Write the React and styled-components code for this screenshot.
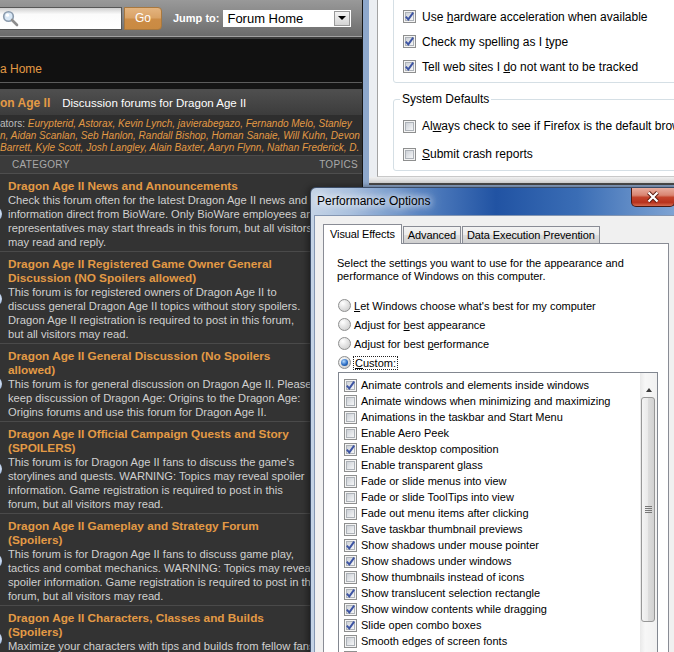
import styled, { createGlobalStyle } from "styled-components";

const GlobalStyle = createGlobalStyle`
  *, *::before, *::after {
    box-sizing: border-box;
  }
  html, body {
    margin: 0;
    padding: 0;
    background: #222;
    overflow: hidden;
  }
`;

const Desktop = styled.div`
  position: relative;
  width: 674px;
  height: 652px;
  overflow: hidden;
  background: #333;
`;

/* ---------- forum page ---------- */

const ForumPage = styled.div`
  position: absolute;
  left: 0;
  top: 0;
  width: 363px;
  height: 652px;
  overflow: hidden;
  display: flex;
  flex-direction: column;
  background: #333;
  border-right: 1px solid #161616;
  font-family: "Liberation Sans", Arial, sans-serif;
`;

const TopBar = styled.div`
  height: 37px;
  flex-shrink: 0;
  display: flex;
  align-items: center;
  background: linear-gradient(#999, #868686 45%, #6b6b6b);
  border-bottom: 1px solid #a0a0a0;
`;

const SearchBox = styled.div`
  width: 122px;
  height: 23px;
  display: flex;
  align-items: center;
  padding-left: 2px;
  background: linear-gradient(#cfcfcf, #fbfbfb 30%, #fff);
  border: 1px solid #575757;
  border-left: none;
`;

const GoButton = styled.div`
  width: 38px;
  height: 23px;
  margin-left: 2px;
  display: flex;
  align-items: center;
  justify-content: center;
  border: 1px solid #a8783f;
  border-radius: 0 4px 4px 0;
  background: linear-gradient(#e4b47f, #d9a265 48%, #cc8c46 52%, #c98a42);
  color: #fff;
  font-size: 12px;
`;

const JumpLabel = styled.span`
  margin-left: 11px;
  color: #fff;
  font-size: 11px;
  font-weight: bold;
`;

const JumpSelect = styled.div`
  margin-left: 4px;
  width: 128px;
  height: 17px;
  display: flex;
  align-items: center;
  background: #fff;
  color: #000;
  font-size: 13px;
  padding-left: 4px;
`;

const SelectArrow = styled.span`
  margin-left: auto;
  margin-right: 1px;
  width: 16px;
  height: 15px;
  display: flex;
  align-items: center;
  justify-content: center;
  border: 1px solid #9a9a9a;
  background: linear-gradient(#f4f4f4, #d4d4d4);

  &::after {
    content: "";
    border-left: 4px solid transparent;
    border-right: 4px solid transparent;
    border-top: 4px solid #000;
  }
`;

const NavBand = styled.div`
  height: 46px;
  flex-shrink: 0;
  padding-top: 23px;
  background: #111;
  border-top: 2px solid #3a3a3a;
  border-bottom: 1px solid #5c5c5c;
  color: #e39a45;
  font-size: 12px;
  line-height: 14px;
  white-space: nowrap;
`;

const SubBand = styled.div`
  height: 8px;
  flex-shrink: 0;
  background: #151515;
  border-bottom: 2px solid #4e4e4e;
`;

const HeaderRow = styled.div`
  height: 24px;
  flex-shrink: 0;
  display: flex;
  align-items: center;
  gap: 12px;
  background: linear-gradient(#4e4e4e, #3c3c3c);
  white-space: nowrap;
`;

const HeaderTitle = styled.span`
  color: #e39a45;
  font-size: 12px;
  font-weight: bold;
`;

const HeaderSub = styled.span`
  color: #fff;
  font-size: 11.5px;
`;

const ModBox = styled.div`
  height: 41px;
  flex-shrink: 0;
  padding-top: 3px;
  background: #2e2e2e;
  border-bottom: 1px solid #4b4b4b;
  font-size: 10px;
  line-height: 12px;
`;

const ModLine = styled.div`
  white-space: nowrap;
  color: #e39a45;
  font-style: italic;
`;

const ModLabel = styled.span`
  color: #bdbdbd;
  font-style: normal;
`;

const CategoryRow = styled.div`
  height: 18px;
  flex-shrink: 0;
  display: flex;
  align-items: center;
  justify-content: space-between;
  padding: 0 4px 0 12px;
  background: #3b3b3b;
  border-bottom: 1px solid #4e4e4e;
  color: #a9a9a9;
  font-size: 10px;
  letter-spacing: 0.3px;
`;

const ForumRow = styled.div`
  flex-shrink: 0;
  display: flex;
  align-items: center;
  padding: 5px 0 2px;
  border-bottom: 1px solid #4a4a4a;
`;

const ForumIcon = styled.span`
  width: 16px;
  height: 16px;
  margin-left: -14px;
  margin-right: 6px;
  flex-shrink: 0;
  border-radius: 50%;
  background: radial-gradient(circle at 75% 45%, #eef4fc, #7ea2d6 55%, #2d5290);
`;

const ForumText = styled.div`
  display: flex;
  flex-direction: column;
  white-space: nowrap;
  line-height: 14px;
`;

const ForumTitle = styled.span`
  color: #e39a45;
  font-size: 11.8px;
  font-weight: bold;
`;

const ForumDesc = styled.span`
  color: #d0d0d0;
  font-size: 11.2px;
`;

/* ---------- firefox options window ---------- */

const FirefoxWindow = styled.div`
  position: absolute;
  left: 363px;
  top: 0;
  width: 311px;
  height: 187px;
  display: flex;
  flex-direction: column;
  background: #8ea8cc;
  font-family: "Liberation Sans", Arial, sans-serif;
`;

const FirefoxBody = styled.div`
  height: 185px;
  margin-left: 6px;
  display: flex;
  flex-direction: column;
  background: #ebeef2;
  border-bottom: 2px solid #4b4b4b;
`;

const FirefoxPane = styled.div`
  height: 177px;
  margin-left: 8px;
  display: flex;
  flex-direction: column;
  padding-left: 15px;
  background: #fff;
  border-left: 1px solid #a3a3a3;
  border-bottom: 1px solid #c9c9c9;
  overflow: hidden;
`;

const FirefoxFoot = styled.div`
  flex: 1;
  background: linear-gradient(#f0f0f0, #d3d3d3);
`;

const GroupBox = styled.div`
  width: 320px;
  margin-top: -10px;
  padding: 13px 0 3px 9px;
  border: 1px solid #d5dfe5;
  border-radius: 3px;
`;

const GroupSet = styled.fieldset`
  width: 320px;
  margin: 9px 0 0;
  padding: 6px 0 2px 9px;
  border: 1px solid #d5dfe5;
  border-radius: 3px;
`;

const GroupLegend = styled.legend`
  margin-left: -3px;
  padding: 0 2px;
  color: #000;
  font-size: 12px;
  line-height: 14px;
`;

const PrefRow = styled.div`
  height: ${(p) => p.$h}px;
  display: flex;
  align-items: center;
  gap: 6px;
  color: #000;
  font-size: 12px;
  white-space: nowrap;
`;

/* ---------- win7 controls ---------- */

const BoxOuter = styled.span`
  position: relative;
  width: 13px;
  height: 13px;
  flex-shrink: 0;
  display: flex;
  padding: 1px;
  border: 1px solid #8e8f8f;
  background: #f4f4f4;
`;

const BoxInner = styled.span`
  flex: 1;
  border: 1px solid #adb2b8;
  background: linear-gradient(135deg, #cdd1d7, #f5f6f7);
`;

const CheckMark = styled.svg`
  position: absolute;
  left: 0;
  top: 0;
`;

const Checkbox = ({ checked }) => (
  <BoxOuter>
    <BoxInner />
    {checked && (
      <CheckMark width="11" height="11" viewBox="0 0 11 11">
        <path d="M1.8 5.6 L4.3 8.4 L9.2 1.6" fill="none" stroke="#3d54a3" strokeWidth="1.9" />
      </CheckMark>
    )}
  </BoxOuter>
);

const Radio = styled.span`
  width: 13px;
  height: 13px;
  flex-shrink: 0;
  display: flex;
  align-items: center;
  justify-content: center;
  border-radius: 50%;
  border: 1px solid #8e8f8f;
  background: radial-gradient(circle at 35% 30%, #fff, #e4e4e4 45%, #c6c6c6);

  &::after {
    content: "";
    display: ${(p) => (p.$on ? "block" : "none")};
    width: 7px;
    height: 7px;
    border-radius: 50%;
    background: radial-gradient(circle at 40% 35%, #b5dcff, #2b6cc4 55%, #103a78);
  }
`;

/* ---------- performance options dialog ---------- */

const Dialog = styled.div`
  position: absolute;
  left: 310px;
  top: 187px;
  width: 372px;
  height: 480px;
  display: flex;
  flex-direction: column;
  padding: 0 6px 0 3px;
  border: 1px solid #3a4b66;
  border-radius: 6px 6px 0 0;
  background: linear-gradient(90deg, #c4d3e6, #abc2df 10%, #5581c0 30%, #2153a3 50%, #3a6db5 72%, #83a7d5);
  box-shadow: -2px 0 6px rgba(0, 0, 0, 0.45);
  font-family: "Liberation Sans", Tahoma, sans-serif;
`;

const TitleBar = styled.div`
  height: 27px;
  flex-shrink: 0;
  display: flex;
  align-items: flex-start;
`;

const TitleText = styled.span`
  margin-top: 6px;
  padding-left: 3px;
  color: #000;
  font-size: 12px;
  line-height: 15px;
  text-shadow: 0 0 6px #fff, 0 0 10px #fff, 0 0 14px rgba(255, 255, 255, 0.8);
`;

const CloseButton = styled.span`
  margin-left: auto;
  width: 44px;
  height: 19px;
  display: flex;
  align-items: center;
  justify-content: center;
  border: 1px solid #4a1710;
  border-top: none;
  border-radius: 0 0 5px 5px;
  background: linear-gradient(#e8ad9f, #d98572 40%, #c3432c 52%, #b8321d 80%, #d46a4f);
`;

const DialogBody = styled.div`
  flex: 1;
  display: flex;
  flex-direction: column;
  padding: 8px 5px 0 8px;
  background: #f0f0f0;
  border: 1px solid #8496b2;
`;

const TabStrip = styled.div`
  position: relative;
  z-index: 1;
  display: flex;
  align-items: flex-end;
  gap: 1px;
  margin-bottom: -1px;
`;

const Tab = styled.span`
  height: ${(p) => (p.$active ? 20 : 18)}px;
  display: flex;
  align-items: center;
  padding: ${(p) => (p.$active ? "0 6px 1px" : "0 4px")};
  border: 1px solid #898c95;
  border-bottom: ${(p) => (p.$active ? "none" : "1px solid #898c95")};
  background: ${(p) =>
    p.$active ? "#fff" : "linear-gradient(#f3f3f3, #ebebeb 48%, #dddddd 52%, #cfcfcf)"};
  color: #000;
  font-size: 11px;
  letter-spacing: -0.1px;
`;

const Panel = styled.div`
  flex: 1;
  display: flex;
  flex-direction: column;
  padding: 13px 0 0 13px;
  background: #fff;
  border: 1px solid #898c95;
  font-size: 11px;
  color: #000;
`;

const Intro = styled.p`
  margin: 0;
  line-height: 13px;
`;

const RadioList = styled.div`
  display: flex;
  flex-direction: column;
  margin: 13px 0 0 1px;
`;

const RadioRow = styled.label`
  height: 19px;
  display: flex;
  align-items: center;
  gap: 3px;
`;

const FocusLabel = styled.span`
  outline: 1px dotted #222;
  outline-offset: 0;
  padding: 0 1px;
`;

const ListBox = styled.div`
  width: 320px;
  height: 300px;
  margin-left: 1px;
  display: flex;
  border: 1px solid #828790;
`;

const ListItems = styled.div`
  flex: 1;
  padding: 4px 0 0 5px;
`;

const ListRow = styled.div`
  height: 16px;
  display: flex;
  align-items: center;
  gap: 4px;
  white-space: nowrap;
`;

const ScrollBar = styled.div`
  width: 17px;
  display: flex;
  flex-direction: column;
  background: linear-gradient(90deg, #e9e9e9, #f7f7f7 30%, #f1f1f1);
`;

const ScrollArrow = styled.span`
  height: 19px;
  display: flex;
  justify-content: center;
  padding-top: 9px;

  &::after {
    content: "";
    border-left: 3.5px solid transparent;
    border-right: 3.5px solid transparent;
    border-bottom: 4px solid #3a3a3a;
  }
`;

const ScrollThumb = styled.span`
  height: 225px;
  margin: 5px 2px 0 1px;
  display: flex;
  align-items: center;
  justify-content: center;
  border: 1px solid #979797;
  border-radius: 3px;
  background: linear-gradient(90deg, #f4f4f4, #e9e9e9 50%, #dcdcdc 52%, #d2d2d2);

  &::after {
    content: "";
    width: 7px;
    height: 7px;
    background: repeating-linear-gradient(#777 0 1px, transparent 1px 2px);
  }
`;

/* ---------- data ---------- */

const moderators = [
  { label: "ators: ", names: "Eurypterid, Astorax, Kevin Lynch, javierabegazo, Fernando Melo, Stanley" },
  { names: "n, Aidan Scanlan, Seb Hanlon, Randall Bishop, Homan Sanaie, Will Kuhn, Devon" },
  { names: "Barrett, Kyle Scott, Josh Langley, Alain Baxter, Aaryn Flynn, Nathan Frederick, D." },
];

const forums = [
  {
    title: ["Dragon Age II News and Announcements"],
    desc: [
      "Check this forum often for the latest Dragon Age II news and",
      "information direct from BioWare. Only BioWare employees and",
      "representatives may start threads in this forum, but all visitors",
      "may read and reply.",
    ],
  },
  {
    title: ["Dragon Age II Registered Game Owner General", "Discussion (NO Spoilers allowed)"],
    desc: [
      "This forum is for registered owners of Dragon Age II to",
      "discuss general Dragon Age II topics without story spoilers.",
      "Dragon Age II registration is required to post in this forum,",
      "but all visitors may read.",
    ],
  },
  {
    title: ["Dragon Age II General Discussion (No Spoilers", "allowed)"],
    desc: [
      "This forum is for general discussion on Dragon Age II. Please",
      "keep discussion of Dragon Age: Origins to the Dragon Age:",
      "Origins forums and use this forum for Dragon Age II.",
    ],
  },
  {
    title: ["Dragon Age II Official Campaign Quests and Story", "(SPOILERS)"],
    desc: [
      "This forum is for Dragon Age II fans to discuss the game's",
      "storylines and quests. WARNING: Topics may reveal spoiler",
      "information. Game registration is required to post in this",
      "forum, but all visitors may read.",
    ],
  },
  {
    title: ["Dragon Age II Gameplay and Strategy Forum", "(Spoilers)"],
    desc: [
      "This forum is for Dragon Age II fans to discuss game play,",
      "tactics and combat mechanics. WARNING: Topics may reveal",
      "spoiler information. Game registration is required to post in this",
      "forum, but all visitors may read.",
    ],
  },
  {
    title: ["Dragon Age II Characters, Classes and Builds", "(Spoilers)"],
    desc: [
      "Maximize your characters with tips and builds from fellow fans",
      "and discuss the classes, skills and talents of Dragon Age II.",
    ],
  },
];

const effects = [
  ["Animate controls and elements inside windows", true],
  ["Animate windows when minimizing and maximizing", false],
  ["Animations in the taskbar and Start Menu", false],
  ["Enable Aero Peek", false],
  ["Enable desktop composition", true],
  ["Enable transparent glass", false],
  ["Fade or slide menus into view", false],
  ["Fade or slide ToolTips into view", false],
  ["Fade out menu items after clicking", false],
  ["Save taskbar thumbnail previews", false],
  ["Show shadows under mouse pointer", true],
  ["Show shadows under windows", true],
  ["Show thumbnails instead of icons", false],
  ["Show translucent selection rectangle", true],
  ["Show window contents while dragging", true],
  ["Slide open combo boxes", true],
  ["Smooth edges of screen fonts", false],
  ["Smooth-scroll list boxes", true],
];

const SearchIcon = () => (
  <svg width="17" height="17" viewBox="0 0 17 17">
    <circle cx="6.5" cy="6.5" r="4.8" fill="#d9e8f6" stroke="#8a9aac" strokeWidth="1.6" />
    <circle cx="5.5" cy="5.2" r="1.6" fill="#fff" />
    <path d="M10 10 L15 15" stroke="#8d8d8d" strokeWidth="2.6" strokeLinecap="round" />
  </svg>
);

const CloseIcon = () => (
  <svg width="14" height="12" viewBox="0 0 14 12">
    <path d="M2.5 1.5 L11.5 10.5 M11.5 1.5 L2.5 10.5" stroke="#5a1a10" strokeWidth="4" />
    <path d="M2.5 1.5 L11.5 10.5 M11.5 1.5 L2.5 10.5" stroke="#fff" strokeWidth="2.2" />
  </svg>
);

const App = () => {
  return (
    <Desktop>
      <GlobalStyle />

      <ForumPage>
        <TopBar>
          <SearchBox>
            <SearchIcon />
          </SearchBox>
          <GoButton>Go</GoButton>
          <JumpLabel>Jump to:</JumpLabel>
          <JumpSelect>
            Forum Home
            <SelectArrow />
          </JumpSelect>
        </TopBar>
        <NavBand>a Home</NavBand>
        <SubBand />
        <HeaderRow>
          <HeaderTitle>on Age II</HeaderTitle>
          <HeaderSub>Discussion forums for Dragon Age II</HeaderSub>
        </HeaderRow>
        <ModBox>
          {moderators.map((m, i) => (
            <ModLine key={i}>
              {m.label && <ModLabel>{m.label}</ModLabel>}
              {m.names}
            </ModLine>
          ))}
        </ModBox>
        <CategoryRow>
          <span>CATEGORY</span>
          <span>TOPICS</span>
        </CategoryRow>
        {forums.map((f, i) => (
          <ForumRow key={i}>
            <ForumIcon />
            <ForumText>
              {f.title.map((t) => (
                <ForumTitle key={t}>{t}</ForumTitle>
              ))}
              {f.desc.map((d) => (
                <ForumDesc key={d}>{d}</ForumDesc>
              ))}
            </ForumText>
          </ForumRow>
        ))}
      </ForumPage>

      <FirefoxWindow>
        <FirefoxBody>
          <FirefoxPane>
            <GroupBox>
              <PrefRow $h={25}>
                <Checkbox checked />
                <span>Use <u>h</u>ardware acceleration when available</span>
              </PrefRow>
              <PrefRow $h={25}>
                <Checkbox checked />
                <span>Check my spelling as I <u>t</u>ype</span>
              </PrefRow>
              <PrefRow $h={25}>
                <Checkbox checked />
                <span>Tell web sites I <u>d</u>o not want to be tracked</span>
              </PrefRow>
            </GroupBox>
            <GroupSet>
              <GroupLegend>System Defaults</GroupLegend>
              <PrefRow $h={28}>
                <Checkbox />
                <span>Al<u>w</u>ays check to see if Firefox is the default browser on startup</span>
              </PrefRow>
              <PrefRow $h={28}>
                <Checkbox />
                <span><u>S</u>ubmit crash reports</span>
              </PrefRow>
            </GroupSet>
          </FirefoxPane>
          <FirefoxFoot />
        </FirefoxBody>
      </FirefoxWindow>

      <Dialog>
        <TitleBar>
          <TitleText>Performance Options</TitleText>
          <CloseButton>
            <CloseIcon />
          </CloseButton>
        </TitleBar>
        <DialogBody>
          <TabStrip>
            <Tab $active>Visual Effects</Tab>
            <Tab>Advanced</Tab>
            <Tab>Data Execution Prevention</Tab>
          </TabStrip>
          <Panel>
            <Intro>
              Select the settings you want to use for the appearance and
              <br />
              performance of Windows on this computer.
            </Intro>
            <RadioList>
              <RadioRow>
                <Radio />
                <span><u>L</u>et Windows choose what's best for my computer</span>
              </RadioRow>
              <RadioRow>
                <Radio />
                <span>Adjust for <u>b</u>est appearance</span>
              </RadioRow>
              <RadioRow>
                <Radio />
                <span>Adjust for best <u>p</u>erformance</span>
              </RadioRow>
              <RadioRow>
                <Radio $on />
                <FocusLabel><u>C</u>ustom:</FocusLabel>
              </RadioRow>
            </RadioList>
            <ListBox>
              <ListItems>
                {effects.map(([label, on]) => (
                  <ListRow key={label}>
                    <Checkbox checked={on} />
                    <span>{label}</span>
                  </ListRow>
                ))}
              </ListItems>
              <ScrollBar>
                <ScrollArrow />
                <ScrollThumb />
              </ScrollBar>
            </ListBox>
          </Panel>
        </DialogBody>
      </Dialog>
    </Desktop>
  );
};

export default App;
